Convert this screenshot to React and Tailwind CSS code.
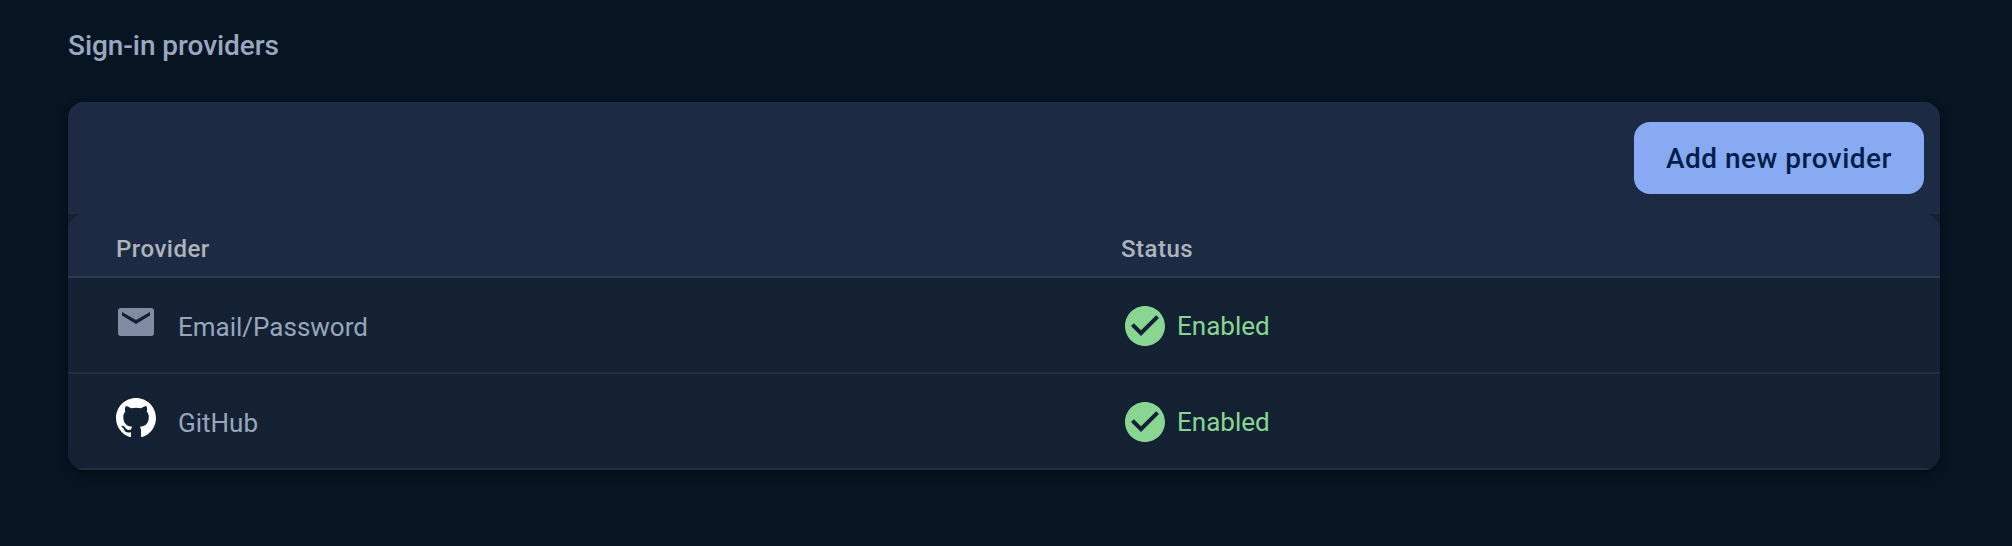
const EmailIcon = () => (
  <svg className="h-7 w-9" viewBox="0 0 36 28" fill="#808ca2">
    <path d="M3 0H33a3 3 0 0 1 3 3V25a3 3 0 0 1-3 3H3a3 3 0 0 1-3-3V3a3 3 0 0 1 3-3ZM18 16L32 7.600V4L18 12L4 4V7.600Z" fillRule="evenodd" />
  </svg>
);

const GithubIcon = () => (
  <svg className="size-10" viewBox="0 0 16 16" fill="#fff">
    <path d="M8 0C3.58 0 0 3.58 0 8c0 3.54 2.29 6.53 5.47 7.59.4.07.55-.17.55-.38 0-.19-.01-.82-.01-1.49-2.01.37-2.53-.49-2.69-.94-.09-.23-.48-.94-.82-1.13-.28-.15-.68-.52-.01-.53.63-.01 1.08.58 1.23.82.72 1.21 1.87.87 2.33.66.07-.52.28-.87.51-1.07-1.78-.2-3.64-.89-3.64-3.95 0-.87.31-1.59.82-2.15-.08-.2-.36-1.02.08-2.12 0 0 .67-.21 2.2.82.64-.18 1.32-.27 2-.27s1.36.09 2 .27c1.53-1.04 2.2-.82 2.2-.82.44 1.1.16 1.92.08 2.12.51.56.82 1.27.82 2.15 0 3.07-1.87 3.75-3.65 3.95.29.25.54.73.54 1.48 0 1.07-.01 1.93-.01 2.2 0 .21.15.46.55.38A8.01 8.01 0 0 0 16 8c0-4.42-3.58-8-8-8z" />
  </svg>
);

const CheckIcon = () => (
  <svg className="size-12 shrink-0" viewBox="0 0 24 24" fill="#89d693">
    <path d="M12 2C6.480 2 2 6.480 2 12s4.480 10 10 10 10-4.480 10-10S17.520 2 12 2zm-2 15l-5-5 1.410-1.410L10 14.170l7.590-7.590L19 8l-9 9z" />
  </svg>
);

const providers = [
  { name: "Email/Password", icon: <EmailIcon /> },
  { name: "GitHub", icon: <GithubIcon /> },
];

export default function App() {
  return (
    <main className="h-[546px] bg-[#071523] pl-[68px] pr-[72px] pt-7 font-['Roboto',sans-serif]">
      <h2 className="text-[28px] leading-9 font-medium tracking-[-0.05px] text-[#9aa8bf]">Sign-in providers</h2>
      <section className="mt-[38px] overflow-hidden rounded-2xl bg-[#132133] shadow-[0_2px_6px_rgba(0,0,0,0.4),0_4px_12px_rgba(0,0,0,0.15)]">
        <div className="flex h-28 justify-end bg-[#1c2b43] pt-5 pr-4">
          <button className="h-[72px] w-[290px] rounded-2xl bg-[#87aaf2] pt-0.5 text-[28px] font-medium tracking-[0.5px] text-[#041e49]">
            Add new provider
          </button>
        </div>
        <div className="grid h-16 grid-cols-[1005px_1fr] items-center rounded-t-2xl border-b-2 border-[#2b3950] bg-[#1c2b43] pt-2 pl-12 text-2xl font-medium tracking-[0.5px] text-[#aeb4bd]">
          <span>Provider</span>
          <span>Status</span>
        </div>
        {providers.map((p) => (
          <div key={p.name} className="grid h-24 grid-cols-[1005px_1fr] items-center border-b-2 border-[#202f42] pt-0.5 pl-12 text-[26px]">
            <div className="flex items-center gap-[22px] text-[#98a6bd]">
              <span className="flex w-10 justify-center pb-2">{p.icon}</span>
              <span className="pt-0.5">{p.name}</span>
            </div>
            <div className="flex items-center gap-2 text-[#89d693]">
              <CheckIcon />
              <span>Enabled</span>
            </div>
          </div>
        ))}
      </section>
    </main>
  );
}
